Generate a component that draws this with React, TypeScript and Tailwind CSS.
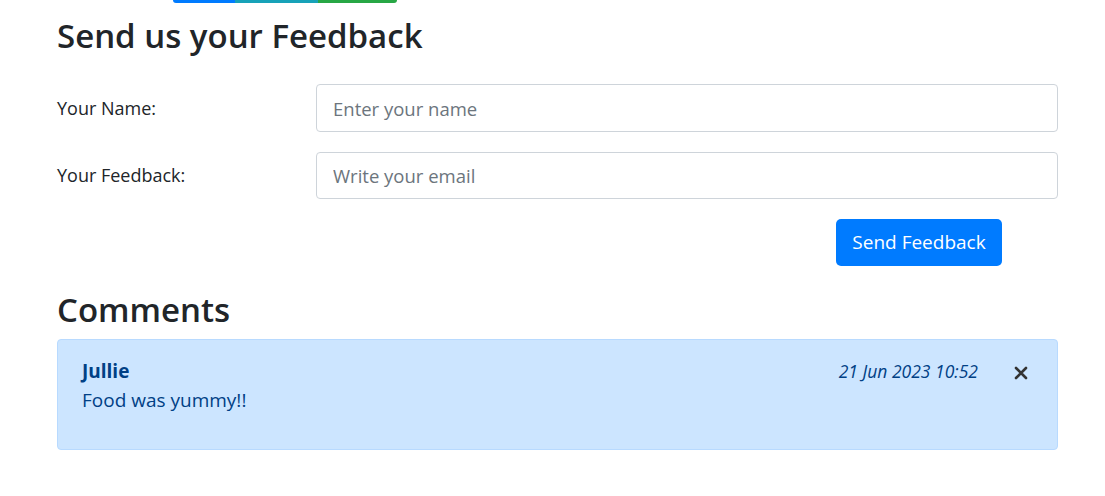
export default function App() {
  return (
    <div className="min-h-[496px] bg-white font-['Segoe_UI','Open_Sans',sans-serif] text-[#212529]">
      <div className="ml-[173px] flex h-[3px] w-[224px] overflow-hidden rounded-b-[4px]">
        <div className="w-[62px] bg-[#007bff]" />
        <div className="w-[83px] bg-[#17a2b8]" />
        <div className="flex-1 bg-[#28a745]" />
      </div>

      <div className="ml-[57px] w-[1001px]">
        <h2 className="mt-[14px] text-[33px] font-semibold leading-[38px]">Send us your Feedback</h2>

        <form className="mt-[29px]" onSubmit={(e) => e.preventDefault()}>
          <div className="grid grid-cols-[259px_1fr] items-center">
            <label className="text-[18px]">Your Name:</label>
            <input
              className="h-[48px] rounded-[4px] border border-[#ced4da] px-4 text-[18.5px] placeholder:text-[#6c757d] outline-none"
              placeholder="Enter your name"
            />
          </div>
          <div className="mt-[20px] grid grid-cols-[259px_1fr] items-center">
            <label className="text-[18px]">Your Feedback:</label>
            <input
              className="h-[47px] rounded-[4px] border border-[#ced4da] px-4 text-[18.5px] placeholder:text-[#6c757d] outline-none"
              placeholder="Write your email"
            />
          </div>
          <button className="ml-[779px] mt-[20px] h-[47px] w-[166px] rounded-[5px] bg-[#007bff] text-[19px] text-white">
            Send Feedback
          </button>
        </form>

        <h2 className="mt-[25px] text-[33px] font-semibold leading-[38px]">Comments</h2>

        <div className="relative mt-[10px] h-[111px] rounded-[4px] border border-[#b8daff] bg-[#cce5ff] pl-[24px] pr-[79px] pt-[17px] text-[#004085]">
          <div className="flex items-baseline justify-between">
            <span className="text-[19px] font-bold">Jullie</span>
            <span className="text-[17.5px] italic">21 Jun 2023 10:52</span>
          </div>
          <p className="text-[19px]">Food was yummy!!</p>
          <button className="absolute right-[29px] top-[26px] text-[#333]">
            <svg width="14" height="14" viewBox="0 0 14 14" fill="none" stroke="currentColor" strokeWidth="2.6" strokeLinecap="round">
              <path d="M2 2 L12 12 M12 2 L2 12" />
            </svg>
          </button>
        </div>
      </div>
    </div>
  );
}
